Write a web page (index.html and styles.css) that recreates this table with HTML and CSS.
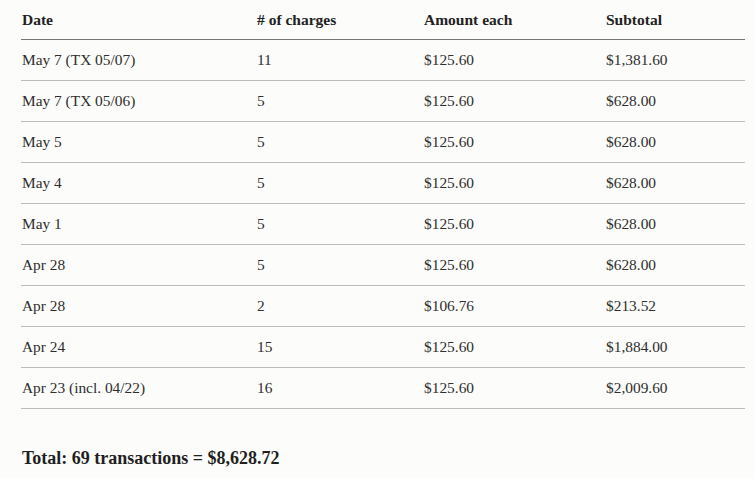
FILE: index.html
```html
<!DOCTYPE html>
<html>
<head>
<meta charset="utf-8">
<link rel="stylesheet" href="styles.css">
</head>
<body>
<div class="page">
  <table class="charges">
    <thead>
      <tr><th class="c1">Date</th><th class="c2"># of charges</th><th class="c3">Amount each</th><th class="c4">Subtotal</th></tr>
    </thead>
    <tbody>
      <tr><td>May 7 (TX 05/07)</td><td>11</td><td>$125.60</td><td>$1,381.60</td></tr>
      <tr><td>May 7 (TX 05/06)</td><td>5</td><td>$125.60</td><td>$628.00</td></tr>
      <tr><td>May 5</td><td>5</td><td>$125.60</td><td>$628.00</td></tr>
      <tr><td>May 4</td><td>5</td><td>$125.60</td><td>$628.00</td></tr>
      <tr><td>May 1</td><td>5</td><td>$125.60</td><td>$628.00</td></tr>
      <tr><td>Apr 28</td><td>5</td><td>$125.60</td><td>$628.00</td></tr>
      <tr><td>Apr 28</td><td>2</td><td>$106.76</td><td>$213.52</td></tr>
      <tr><td>Apr 24</td><td>15</td><td>$125.60</td><td>$1,884.00</td></tr>
      <tr><td>Apr 23 (incl. 04/22)</td><td>16</td><td>$125.60</td><td>$2,009.60</td></tr>
    </tbody>
  </table>
  <p class="total">Total: 69 transactions = $8,628.72</p>
</div>
</body>
</html>
```
FILE: styles.css
```css
html, body {
  margin: 0;
  padding: 0;
  background: #fcfcfa;
}
.page {
  padding: 0 13px 0 21px;
  font-family: "Liberation Serif", serif;
  color: #2e2e2e;
}
.charges {
  width: 720px;
  border-collapse: collapse;
  table-layout: fixed;
  font-size: 15.4px;
}
.charges th {
  text-align: left;
  font-weight: bold;
  font-size: 15.5px;
  color: #222;
  padding: 10px 0 9px 1px;
  line-height: 20px;
  border-bottom: 1px solid #777;
}
.charges td {
  padding: 10px 0 10px 1px;
  line-height: 20px;
  border-bottom: 1px solid #bdbdbb;
}
.c1 { width: 234px; }
.c2 { width: 166px; }
.c3 { width: 181px; }
.c4 { width: 139px; }
.total {
  margin: 38px 0 0 1px;
  font-size: 18px;
  font-weight: bold;
  line-height: 22px;
  color: #1f1f1f;
}
```
